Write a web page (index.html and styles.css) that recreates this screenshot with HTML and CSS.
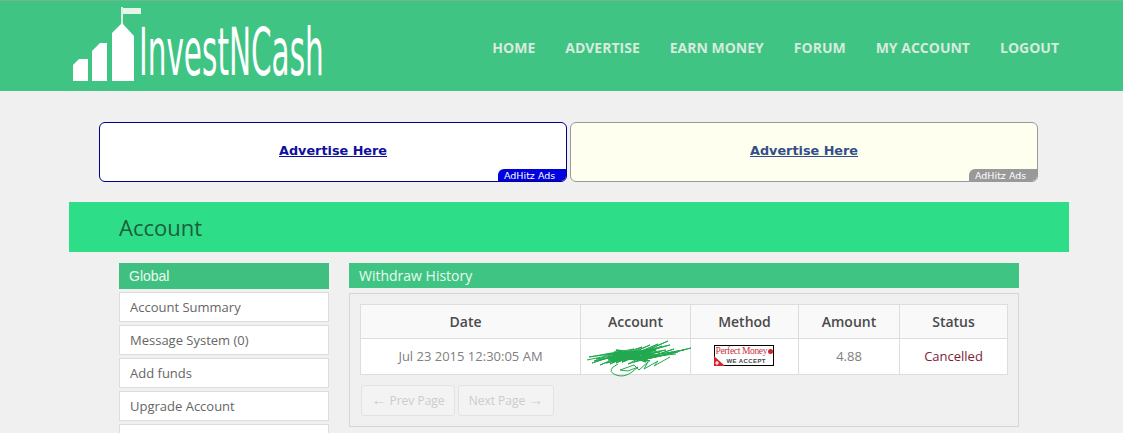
FILE: index.html
```html
<!DOCTYPE html>
<html lang="en">
<head>
    <meta charset="UTF-8">
    <meta name="viewport" content="width=device-width, initial-scale=1.0">
    <title>InvestNCash - Account</title>
    <link rel="stylesheet" href="styles.css">
</head>
<body>
<div class="page">

    <header class="site-header">
        <a class="logo" href="#">
            <svg class="logo-mark" width="70" height="91" viewBox="0 0 70 91">
                <path d="M0 65 L6 59 H15 V81 H0 Z" fill="#fff"/>
                <path d="M19 51 L27 43 H34 V81 H19 Z" fill="#fff"/>
                <path d="M39 33 L49 23 L61 36 V81 H39 Z" fill="#fff"/>
                <path d="M49 24 V7" stroke="#fff" stroke-width="1.6" fill="none"/>
                <path d="M50 8 H68 V14 H50 Z" fill="#e4f5ea"/>
            </svg>
            <span class="logo-text">InvestNCash</span>
        </a>
        <nav class="main-nav">
            <a href="#">Home</a>
            <a href="#">Advertise</a>
            <a href="#">Earn Money</a>
            <a href="#">Forum</a>
            <a href="#">My Account</a>
            <a href="#">Logout</a>
        </nav>
    </header>

    <div class="ads">
        <div class="ad ad-blue">
            <a href="#">Advertise Here</a>
            <span class="ad-tag">AdHitz Ads</span>
        </div>
        <div class="ad ad-cream">
            <a href="#">Advertise Here</a>
            <span class="ad-tag">AdHitz Ads</span>
        </div>
    </div>

    <div class="wrap">
        <h1 class="page-title">Account</h1>

        <div class="columns">
            <aside class="sidebar">
                <h3>Global</h3>
                <a href="#">Account Summary</a>
                <a href="#">Message System (0)</a>
                <a href="#">Add funds</a>
                <a href="#">Upgrade Account</a>
                <a href="#"></a>
            </aside>

            <main class="content">
                <h3>Withdraw History</h3>
                <div class="panel">
                    <table class="history">
                        <thead>
                            <tr>
                                <th class="col-date">Date</th>
                                <th class="col-account">Account</th>
                                <th class="col-method">Method</th>
                                <th class="col-amount">Amount</th>
                                <th>Status</th>
                            </tr>
                        </thead>
                        <tbody>
                            <tr>
                                <td>Jul 23 2015 12:30:05 AM</td>
                                <td class="scribble-cell">
                                    <!-- account number scribbled out -->
                                    <svg class="scribble" width="106" height="37" viewBox="0 0 106 37">
                                        <path d="M1 20 L40 12 L3 17 L48 9 L6 23 L56 7 L14 25 L64 5 L24 24 L72 4 L30 23 L82 1 L36 22 L76 6 L42 24 L88 9 L48 22 L105 8 L56 20 L92 12 L60 19 L80 15 L22 20 L70 9 L18 15 L60 12 L26 22 L74 12 L34 17 L80 10 L38 20 L66 14 L30 14 L58 18 L24 18 L68 17 L10 19 L50 11 L8 21 L84 5 L20 23 L98 10 L44 19 L90 14" fill="none" stroke="#22a94f" stroke-width="1"/>
                                        <path d="M22 14 L70 10 L26 21 L68 15 L28 12 L64 21 L32 18 L66 9 L36 22 L62 11 L24 17 L72 16 L30 10 L60 22" fill="none" stroke="#22a94f" stroke-width="1.6"/>
                                        <path d="M32 24 L27 27 Q22 32 30 35 Q38 38 46 32 L52 27 L42 31 L34 30 L48 25 L53 30 L62 22 L58 29 L72 21 L68 26 L84 17" fill="none" stroke="#22a94f" stroke-width="1"/>
                                    </svg>
                                </td>
                                <td>
                                    <div class="pm-badge">
                                        <span class="pm-name">Perfect Money</span>
                                        <span class="pm-dot"></span>
                                        <span class="pm-accept">WE ACCEPT</span>
                                        <svg class="pm-corner" width="11" height="10" viewBox="0 0 11 10">
                                            <path d="M0 0 L11 10 H0 Z" fill="#d3222a"/>
                                            <path d="M3 5 V9 M1 7 H5" stroke="#fff" stroke-width="1.2"/>
                                        </svg>
                                    </div>
                                </td>
                                <td>4.88</td>
                                <td class="status-cancelled">Cancelled</td>
                            </tr>
                        </tbody>
                    </table>
                    <div class="pager">
                        <button class="btn-prev" disabled><span class="arrow">&larr;</span> Prev Page</button>
                        <button class="btn-next" disabled>Next Page <span class="arrow">&rarr;</span></button>
                    </div>
                </div>
            </main>
        </div>
    </div>

</div>
</body>
</html>
```

FILE: styles.css
```css
* {
    box-sizing: border-box;
}

html, body {
    margin: 0;
    padding: 0;
}

body {
    font-family: "Open Sans", Arial, sans-serif;
    background-color: #f0f0f0;
    color: #555;
}

a {
    text-decoration: none;
}

.page {
    height: 100vh;
    overflow: hidden;
}

/* header */
.site-header {
    height: 91px;
    display: flex;
    justify-content: space-between;
    align-items: center;
    padding: 0 64px 0 73px;
    background-color: #40c483;
    border-top: 1px solid #6fb592;
}

.logo {
    display: flex;
    align-items: center;
    height: 90px;
    margin-top: -1px;
}

.logo-mark {
    flex: none;
}

.logo-text {
    display: inline-block;
    width: 110px;
    margin: 14px 0 0 -4px;
    font-family: "DejaVu Sans", sans-serif;
    font-size: 66px;
    line-height: 60px;
    color: #fff;
    white-space: nowrap;
    transform: scaleX(0.447);
    transform-origin: left center;
}

.main-nav {
    display: flex;
    gap: 30px;
    margin-top: 2px;
}

.main-nav a {
    font-size: 14px;
    font-weight: 700;
    text-transform: uppercase;
    color: #d6ebde;
}

/* ad banners */
.ads {
    display: flex;
    gap: 3px;
    margin: 31px 0 20px 99px;
}

.ad {
    position: relative;
    width: 468px;
    height: 60px;
    display: flex;
    justify-content: center;
    align-items: center;
    padding-bottom: 4px;
    border: 1px solid;
    border-radius: 6px;
    font-family: "DejaVu Sans", Verdana, sans-serif;
    overflow: hidden;
}

.ad a {
    font-size: 12.8px;
    font-weight: 700;
    text-decoration: underline;
}

.ad-tag {
    position: absolute;
    right: -1px;
    bottom: -1px;
    width: 69px;
    height: 13px;
    padding-left: 6px;
    font-size: 9.5px;
    line-height: 13px;
    color: #fff;
    border-top-left-radius: 6px;
}

.ad-blue {
    background-color: #fff;
    border-color: #00008b;
}

.ad-blue a {
    color: #0f0f9e;
}

.ad-blue .ad-tag {
    background-color: #0000e0;
}

.ad-cream {
    background-color: #fffff0;
    border-color: #999;
}

.ad-cream a {
    color: #334f88;
}

.ad-cream .ad-tag {
    background-color: #999;
}

/* main area */
.wrap {
    width: 1000px;
    margin-left: 69px;
}

.page-title {
    height: 50px;
    margin: 0 0 11px;
    padding-left: 50px;
    font-size: 22px;
    font-weight: 400;
    line-height: 51px;
    color: #1b5f3c;
    background-color: #2edd87;
}

.columns {
    display: flex;
    gap: 20px;
    padding: 0 50px;
}

.sidebar {
    width: 210px;
    flex: none;
}

.sidebar h3 {
    height: 26px;
    margin: 0 0 3px;
    padding-left: 10px;
    font-family: "Liberation Sans", Arial, sans-serif;
    font-size: 14px;
    font-weight: 400;
    line-height: 26px;
    color: #e8fbef;
    background-color: #40c080;
}

.sidebar a {
    display: block;
    height: 30px;
    margin-bottom: 3px;
    padding-left: 10px;
    font-size: 13px;
    line-height: 28px;
    color: #666;
    background-color: #fff;
    border: 1px solid #ddd;
}

.content {
    flex: 1;
}

.content h3 {
    height: 25px;
    margin: 0 0 5px;
    padding-left: 10px;
    font-size: 14px;
    font-weight: 400;
    line-height: 25px;
    color: #e8fbef;
    background-color: #40c483;
}

.panel {
    height: 134px;
    padding: 10px;
    border: 1px solid #d5d5d5;
}

/* withdraw table */
.history {
    width: 648px;
    border-collapse: collapse;
    table-layout: fixed;
    text-align: center;
}

.history th,
.history td {
    padding: 0;
    border: 1px solid #ddd;
}

.history th {
    height: 34px;
    font-size: 14px;
    font-weight: 600;
    color: #4a4a4a;
    background-color: #f9f9f9;
}

.history td {
    height: 36px;
    padding-bottom: 2px;
    font-size: 13px;
    color: #808080;
    background-color: #fff;
}

.history th.col-date {
    width: 220px;
    padding-right: 10px;
}

.col-account {
    width: 110px;
}

.col-method {
    width: 108px;
}

.col-amount {
    width: 101px;
}

.scribble-cell {
    position: relative;
}

.scribble {
    position: absolute;
    left: 5px;
    top: 1px;
}

.history .status-cancelled {
    color: #7b2336;
}

/* perfect money badge */
.pm-badge {
    position: relative;
    left: -1px;
    width: 60px;
    height: 21px;
    margin: 0 auto;
    background-color: #fff;
    border: 1px solid #000;
}

.pm-name {
    position: absolute;
    left: 1px;
    top: 0;
    font-family: "Liberation Serif", serif;
    font-size: 9.5px;
    line-height: 11px;
    letter-spacing: -0.35px;
    color: #c8323a;
    white-space: nowrap;
}

.pm-dot {
    position: absolute;
    right: 0;
    top: 3px;
    width: 5px;
    height: 5px;
    background-color: #d3222a;
    border-radius: 50%;
}

.pm-accept {
    position: absolute;
    left: 12px;
    top: 11px;
    font-family: "Liberation Sans", Arial, sans-serif;
    font-size: 6px;
    font-weight: 700;
    line-height: 8px;
    letter-spacing: 0.4px;
    color: #444;
    white-space: nowrap;
}

.pm-corner {
    position: absolute;
    left: -1px;
    bottom: -1px;
}

/* pager */
.pager {
    display: flex;
    gap: 3px;
    margin: 10px 0 0 1px;
}

.pager button {
    height: 31px;
    padding: 0;
    font-family: "Open Sans", Arial, sans-serif;
    font-size: 12px;
    color: #ccc;
    background-color: #f3f3f3;
    border: 1px solid #e2e2e2;
    border-radius: 3px;
}

.pager .arrow {
    font-family: "Liberation Sans", Arial, sans-serif;
    font-size: 15px;
    line-height: 12px;
}

.btn-prev {
    width: 94px;
}

.btn-next {
    width: 96px;
}
```
